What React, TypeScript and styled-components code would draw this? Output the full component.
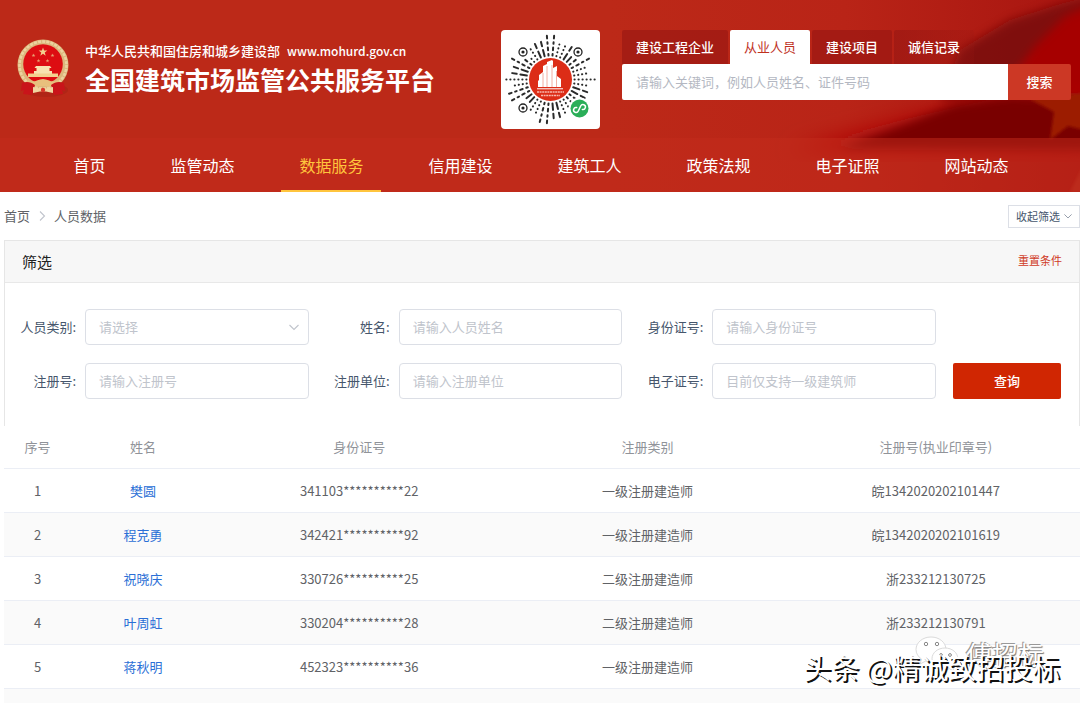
import React from "react";
import styled, { createGlobalStyle } from "styled-components";

const Global = createGlobalStyle`
  * { box-sizing: border-box; }
  body {
    margin: 0;
    background: #fff;
    color: #606266;
    font-family: "Noto Sans CJK SC", sans-serif;
    font-size: 13px;
    line-height: 20px;
  }
  button, input, select { font: inherit; }
  a { text-decoration: none; color: inherit; }
`;

const Page = styled.div`
  position: relative;
  overflow: hidden;
`;

const Header = styled.header`
  position: relative;
  background: #bc2918;
  color: #fff;
`;

const Flag = styled.svg`
  position: absolute;
  top: 0;
  right: 0;
  width: 470px;
  height: 100%;
`;

const Banner = styled.div`
  position: relative;
  display: flex;
  align-items: flex-start;
  height: 138px;
  padding: 30px 9px 0 16px;
`;

const Emblem = styled.svg`
  flex: none;
  width: 54px;
  height: 60px;
  margin-top: 8px;
`;

const Titles = styled.div`
  flex: 1;
  padding: 11px 0 0 15px;
  white-space: nowrap;
`;

const Ministry = styled.p`
  display: flex;
  gap: 7px;
  margin: 0;
  font-weight: 500;
`;

const Address = styled.span`
  font-size: 12px;
`;

const SiteName = styled.h1`
  margin: 0;
  font-size: 25px;
  line-height: 36px;
  font-weight: 700;
`;

const CodeCard = styled.div`
  flex: none;
  width: 99px;
  height: 99px;
  margin-right: 22px;
  border-radius: 4px;
  background: #fff;
`;

const Search = styled.form`
  flex: 0 1 449px;
`;

const Tabs = styled.div`
  display: flex;
  gap: 2px;
`;

const Tab = styled.button<{ $active?: boolean }>`
  height: 34px;
  padding: 0 14px;
  border: 0;
  border-radius: 2px 2px 0 0;
  white-space: nowrap;
  font-weight: ${(p) => (p.$active ? 400 : 500)};
  color: ${(p) => (p.$active ? "#c0321f" : "#fff")};
  background: ${(p) => (p.$active ? "#fff" : "rgba(150, 22, 18, 0.6)")};
  &:last-child { background: linear-gradient(90deg, rgba(150, 22, 18, 0.6), rgba(150, 22, 18, 0.2)); }
`;

const SearchRow = styled.div`
  display: flex;
  height: 36px;
`;

const SearchInput = styled.input`
  flex: 1;
  min-width: 0;
  padding: 0 14px;
  border: 0;
  border-radius: 2px 0 0 2px;
  background: #fff;
  &::placeholder { color: #b4b8c2; }
`;

const SearchButton = styled.button`
  width: 63px;
  border: 0;
  border-radius: 0 2px 2px 0;
  background: #cc3825;
  color: #fff;
  font-weight: 500;
`;

const Nav = styled.nav`
  position: relative;
  display: flex;
  justify-content: center;
  gap: 29px;
  height: 54px;
  padding-left: 2px;
  background: rgba(196, 44, 28, 0.5);
`;

const NavLink = styled.a<{ $active?: boolean }>`
  padding: 0 18px;
  font-size: 16px;
  line-height: 54px;
  white-space: nowrap;
  color: ${(p) => (p.$active ? "#ffc53d" : "#fff")};
  box-shadow: ${(p) => (p.$active ? "inset 0 -2px #ffc53d" : "none")};
`;

const Main = styled.main`
  padding-left: 4px;
`;

const CrumbBar = styled.div`
  display: flex;
  align-items: center;
  justify-content: space-between;
  height: 48px;
`;

const Crumbs = styled.nav`
  display: flex;
  align-items: center;
  gap: 7px;
`;

const Toggle = styled.button`
  display: flex;
  align-items: center;
  gap: 4px;
  height: 23px;
  padding: 0 7px;
  border: 1px solid #dcdfe6;
  background: #fff;
  color: #46566c;
  font-size: 11px;
`;

const Panel = styled.section`
  border: 1px solid #e6e6e6;
  border-bottom: 0;
`;

const PanelHead = styled.div`
  display: flex;
  align-items: center;
  justify-content: space-between;
  height: 42px;
  padding: 0 17px;
  border-bottom: 1px solid #e8e8e8;
  background: #f7f7f7;
`;

const PanelTitle = styled.h2`
  margin: 0;
  font-size: 15px;
  font-weight: 400;
  color: #222;
`;

const Reset = styled.button`
  padding: 0 0 4px;
  border: 0;
  background: none;
  color: #d03a26;
  font-size: 11px;
`;

const FilterForm = styled.form`
  display: flex;
  align-items: flex-end;
  gap: 17px;
  padding: 26px 18px 27px 0;
`;

const FieldGrid = styled.div`
  flex: 1;
  display: grid;
  grid-template-columns: repeat(3, 1fr);
  gap: 18px 10px;
`;

const Field = styled.div`
  display: flex;
  align-items: center;
  gap: 9px;
`;

const FieldLabel = styled.label`
  flex: none;
  width: 71px;
  text-align: right;
  white-space: nowrap;
  color: #46566c;
`;

const TextBox = styled.input`
  flex: 1;
  min-width: 0;
  height: 36px;
  padding: 0 13px 2px;
  border: 1px solid #dcdfe6;
  border-radius: 4px;
  background: #fff;
  &::placeholder { color: #c0c4cc; }
`;

const SelectWrap = styled.div`
  position: relative;
  flex: 1;
  min-width: 0;
`;

const SelectBox = styled.select`
  width: 100%;
  height: 36px;
  padding: 0 13px;
  border: 1px solid #dcdfe6;
  border-radius: 4px;
  background: #fff;
  color: #c0c4cc;
  appearance: none;
`;

const SelectArrow = styled.span`
  position: absolute;
  top: 0;
  right: 10px;
  display: flex;
  align-items: center;
  height: 36px;
  pointer-events: none;
`;

const QueryButton = styled.button`
  flex: none;
  width: 108px;
  height: 36px;
  border: 0;
  border-radius: 2px;
  background: #d02602;
  color: #fff;
  font-weight: 500;
`;

const Table = styled.table`
  width: 100%;
  table-layout: fixed;
  border-collapse: separate;
  border-spacing: 0;
`;

const HeadCell = styled.th`
  height: 43px;
  padding: 0;
  border-bottom: 1px solid #ebeef5;
  font-weight: 400;
  color: #909399;
`;

const Row = styled.tr`
  &:nth-child(even) { background: #fafafa; }
`;

const Cell = styled.td`
  height: 44px;
  padding: 0;
  border-bottom: 1px solid #ebeef5;
  text-align: center;
`;

const NextRow = styled.div`
  height: 15px;
  background: #fafafa;
`;

const Person = styled.a`
  color: #2b6fd6;
`;

const Account = styled.div`
  position: absolute;
  right: 36px;
  bottom: 30px;
  display: flex;
  align-items: center;
  gap: 6px;
  color: #fff;
  font-size: 26px;
  line-height: 40px;
  text-shadow: 1px 1px 1px #777, -1px -1px 0 #999;
`;

const Byline = styled.div`
  position: absolute;
  right: 20px;
  bottom: 17px;
  color: #fff;
  font-size: 28px;
  line-height: 40px;
  text-shadow: 2px 2px 0 #111;
`;

function Chevron({ right, color = "#c0c4cc", size = 10 }: { right?: boolean; color?: string; size?: number }) {
  return (
    <svg width={size} height={size} viewBox="0 0 10 10" fill="none" stroke={color} strokeWidth="1.1" aria-hidden="true">
      <path d={right ? "M3 0.5 7.5 5 3 9.5" : "M0.5 3 5 7.5 9.5 3"} />
    </svg>
  );
}

function starPoints(cx: number, cy: number, r: number) {
  return Array.from({ length: 10 }, (_, i) => {
    const a = (i * Math.PI) / 5 - Math.PI / 2;
    const d = i % 2 ? r * 0.4 : r;
    return `${(cx + d * Math.cos(a)).toFixed(2)},${(cy + d * Math.sin(a)).toFixed(2)}`;
  }).join(" ");
}

function NationalEmblem() {
  return (
    <Emblem viewBox="0 0 54 60" role="img" aria-label="国徽">
      <ellipse cx="30" cy="52" rx="22" ry="7" fill="#8d1a10" opacity="0.25" />
      <circle cx="27" cy="27" r="25.5" fill="#dcb77c" />
      <circle cx="27" cy="27" r="23.5" fill="none" stroke="#ecd3a0" strokeWidth="2.6" strokeDasharray="3 1.2" />
      <circle cx="27" cy="26" r="19.8" fill="#dd0d12" />
      <polygon points={starPoints(27, 14, 4.6)} fill="#f3d08f" />
      <polygon points={starPoints(17.5, 17.5, 2)} fill="#e8a070" />
      <polygon points={starPoints(36.5, 17.5, 2)} fill="#e8a070" />
      <polygon points={starPoints(22.5, 22.8, 2)} fill="#e8a070" />
      <polygon points={starPoints(31.5, 22.8, 2)} fill="#e8a070" />
      <path d="M20 28h14l1.5 2h-2v3H36v4H18v-4h2.500v-3h-2z" fill="#f8e2b0" />
      <path d="M12 35.500h30v3.500H12z" fill="#f3d08f" />
      <path d="M12 42c5 4 10-1 15-1s10 5 15 1l3 3c-5 5-11 3-18 3s-13 2-18-3z" fill="#e8c07d" />
      <path d="M6 45c5-2 9-1 13 2l-3 10-9-1 1-4-3 1z M48 45c-5-2-9-1-13 2l3 10 9-1-1-4 3 1z" fill="#c9141a" />
      <path d="M17 49l7 1.500h6l7-1.500v6l-7-1.500h-6L17 55z" fill="#f0d5a0" />
      <circle cx="27" cy="52" r="2.2" fill="#d9372a" />
    </Emblem>
  );
}

const RAYS = 38;

function ProgramCode() {
  const dashes: React.ReactNode[] = [];
  for (let i = 0; i < RAYS; i++) {
    let r = 24;
    let k = 0;
    const limit = i % 19 === 0 ? 46 : 40 + ((i * 7) % 6);
    while (r < limit - 1) {
      const len = [0.2, 4.5, 1.6, 0.2, 6.5, 2.6][(i * 5 + k * 3 + ((i * i) % 4)) % 6];
      const end = Math.min(r + len, limit);
      const a = (i * 2 * Math.PI) / RAYS;
      const c = Math.cos(a);
      const s = Math.sin(a);
      const m = (r + end) / 2;
      const onEye = [[22, 22], [77, 22], [22, 78]].some(
        ([x, y]) => Math.hypot(49.5 + m * c - x, 49.5 + m * s - y) < 7,
      );
      if (!onEye) {
        dashes.push(<line key={`${i}-${k}`} x1={49.5 + r * c} y1={49.5 + r * s} x2={49.5 + end * c} y2={49.5 + end * s} />);
      }
      r = end + 3.8;
      k++;
    }
  }
  return (
    <svg width="99" height="99" viewBox="0 0 99 99" role="img" aria-label="小程序码">
      <g stroke="#2a2a2a" strokeWidth="2" strokeLinecap="round">{dashes}</g>
      {[[22, 22], [77, 22], [22, 78]].map(([x, y]) => (
        <g key={`${x}-${y}`}>
          <circle cx={x} cy={y} r="4" fill="#fff" stroke="#222" strokeWidth="1.3" />
          <circle cx={x} cy={y} r="1.6" fill="#222" />
        </g>
      ))}
      <circle cx="49.500" cy="49.500" r="21.500" fill="#dc2d17" />
      <path d="M37 57V51l1-1v-5l4-3v-6l4-2v-2l5-2 1 1v7l4-2v10l4 3v8z" fill="#fff" />
      <path d="M42 43v14M46 36v21M51 35v22M55.500 41v16" stroke="#ee9a8c" strokeWidth="0.8" />
      <path d="M36 58.800h26" stroke="#fff" strokeWidth="1" />
      <path d="M36 62h27M40 65.500h19" stroke="#f7b9ae" strokeWidth="1.600" strokeDasharray="2 0.600" />
      <circle cx="78.500" cy="78.500" r="11" fill="#fff" />
      <circle cx="78.500" cy="78.500" r="9" fill="#2aae58" />
      <path transform="rotate(25 78.5 78.5)" d="M75.500 78.800a2.500 2.500 0 1 0 3 2.500v-5.600a2.500 2.500 0 1 1 3 2.500" fill="none" stroke="#fff" strokeWidth="1.500" strokeLinecap="round" />
    </svg>
  );
}

function FlagArt() {
  return (
    <Flag viewBox="0 0 470 192" preserveAspectRatio="none" aria-hidden="true">
      <defs>
        <linearGradient id="base" x1="0" y1="0" x2="1" y2="0">
          <stop offset="0" stopColor="#bc2918" />
          <stop offset="0.5" stopColor="#b92417" />
          <stop offset="1" stopColor="#a81510" />
        </linearGradient>
        <filter id="edge" x="-20%" y="-20%" width="140%" height="140%">
          <feGaussianBlur stdDeviation="1.5" />
        </filter>
        <filter id="soft" x="-20%" y="-20%" width="140%" height="140%">
          <feGaussianBlur stdDeviation="5" />
        </filter>
        <filter id="softer" x="-20%" y="-20%" width="140%" height="140%">
          <feGaussianBlur stdDeviation="10" />
        </filter>
      </defs>
      <rect width="470" height="192" fill="url(#base)" />
      <path d="M350 50 400 20 450 4 490-6V40L420 66 380 100H330z" fill="#780d0c" filter="url(#soft)" opacity="0.85" />
      <path d="M490 0 455 16 425 46 400 80 370 110 490 100z" fill="#a60204" filter="url(#soft)" />
      <path d="M180 150 300 118 400 95 480 92V150z" fill="#b00c0c" filter="url(#softer)" />
      <path d="M230 148 300 122 345 104 400 96 490 100V150z" fill="#790404" filter="url(#soft)" />
      <path d="M418 98 444 112 440 140 458 126 490 134V92z" fill="#9c1c06" filter="url(#edge)" />
      <path d="M460 192 472 168V192z" fill="#b52a1c" filter="url(#edge)" />
    </Flag>
  );
}

function WeChatMark() {
  return (
    <svg width="46" height="38" viewBox="0 0 46 38" aria-hidden="true">
      <g fill="#fff" stroke="#d0d0d0" strokeWidth="0.8">
        <path d="M17 2C8.500 2 2 7.700 2 14.500c0 4 2.200 7.300 5.600 9.600L6 29l5.600-2.900c1.700.5 3.500.8 5.400.8 8.500 0 15-5.600 15-12.400S25.500 2 17 2z" />
        <path d="M31 13c-7.300 0-13 4.800-13 10.700S23.700 34.500 31 34.500c1.600 0 3.100-.2 4.500-.7l4.600 2.400-1.300-4.100c3-2 5-5 5-8.400C43.800 17.800 38.300 13 31 13z" />
      </g>
      <g fill="#fff" stroke="#888" strokeWidth="1">
        <circle cx="12" cy="9" r="1.700" />
        <circle cx="23" cy="9" r="1.700" />
        <circle cx="27" cy="20" r="1.400" />
        <circle cx="36" cy="20" r="1.400" />
      </g>
    </svg>
  );
}

const navItems = ["首页", "监管动态", "数据服务", "信用建设", "建筑工人", "政策法规", "电子证照", "网站动态"];
const searchTabs = ["建设工程企业", "从业人员", "建设项目", "诚信记录"];

const fields = [
  { id: "category", label: "人员类别:", hint: "请选择", select: true },
  { id: "name", label: "姓名:", hint: "请输入人员姓名" },
  { id: "idcard", label: "身份证号:", hint: "请输入身份证号" },
  { id: "regno", label: "注册号:", hint: "请输入注册号" },
  { id: "company", label: "注册单位:", hint: "请输入注册单位" },
  { id: "ecert", label: "电子证号:", hint: "目前仅支持一级建筑师" },
];

const people = [
  ["樊圆", "341103**********22", "一级注册建造师", "皖1342020202101447"],
  ["程克勇", "342421**********92", "一级注册建造师", "皖1342020202101619"],
  ["祝晓庆", "330726**********25", "二级注册建造师", "浙233212130725"],
  ["叶周虹", "330204**********28", "二级注册建造师", "浙233212130791"],
  ["蒋秋明", "452323**********36", "一级注册建造师", ""],
];

export default function App() {
  return (
    <Page>
      <Global />
      <Header>
        <FlagArt />
        <Banner>
          <NationalEmblem />
          <Titles>
            <Ministry>
              <span>中华人民共和国住房和城乡建设部</span>
              <Address>www.mohurd.gov.cn</Address>
            </Ministry>
            <SiteName>全国建筑市场监管公共服务平台</SiteName>
          </Titles>
          <CodeCard>
            <ProgramCode />
          </CodeCard>
          <Search onSubmit={(e) => e.preventDefault()}>
            <Tabs>
              {searchTabs.map((t) => (
                <Tab key={t} type="button" $active={t === "从业人员"}>{t}</Tab>
              ))}
            </Tabs>
            <SearchRow>
              <SearchInput aria-label="关键词" placeholder="请输入关键词，例如人员姓名、证件号码" />
              <SearchButton type="submit">搜索</SearchButton>
            </SearchRow>
          </Search>
        </Banner>
        <Nav>
          {navItems.map((t) => (
            <NavLink key={t} href="#" $active={t === "数据服务"}>{t}</NavLink>
          ))}
        </Nav>
      </Header>
      <Main>
        <CrumbBar>
          <Crumbs aria-label="面包屑">
            <a href="#">首页</a>
            <Chevron right />
            <span>人员数据</span>
          </Crumbs>
          <Toggle type="button">
            收起筛选
            <Chevron color="#8a93a0" size={8} />
          </Toggle>
        </CrumbBar>
        <Panel>
          <PanelHead>
            <PanelTitle>筛选</PanelTitle>
            <Reset type="reset" form="filters">重置条件</Reset>
          </PanelHead>
          <FilterForm id="filters" onSubmit={(e) => e.preventDefault()}>
            <FieldGrid>
              {fields.map((f) => (
                <Field key={f.id}>
                  <FieldLabel htmlFor={f.id}>{f.label}</FieldLabel>
                  {f.select ? (
                    <SelectWrap>
                      <SelectBox id={f.id}>
                        <option>{f.hint}</option>
                      </SelectBox>
                      <SelectArrow><Chevron /></SelectArrow>
                    </SelectWrap>
                  ) : (
                    <TextBox id={f.id} placeholder={f.hint} />
                  )}
                </Field>
              ))}
            </FieldGrid>
            <QueryButton type="submit">查询</QueryButton>
          </FilterForm>
        </Panel>
        <Table>
          <colgroup>
            <col width="67" />
            <col width="144" />
            <col />
            <col />
            <col />
          </colgroup>
          <thead>
            <tr>
              {["序号", "姓名", "身份证号", "注册类别", "注册号(执业印章号)"].map((h) => (
                <HeadCell key={h} scope="col">{h}</HeadCell>
              ))}
            </tr>
          </thead>
          <tbody>
            {people.map(([name, id, kind, reg], i) => (
              <Row key={id}>
                <Cell>{i + 1}</Cell>
                <Cell><Person href="#">{name}</Person></Cell>
                <Cell>{id}</Cell>
                <Cell>{kind}</Cell>
                <Cell>{reg}</Cell>
              </Row>
            ))}
          </tbody>
        </Table>
        <NextRow />
      </Main>
      <Account>
        <WeChatMark />
        傅招标
      </Account>
      <Byline>头条 @精诚致招投标</Byline>
    </Page>
  );
}
